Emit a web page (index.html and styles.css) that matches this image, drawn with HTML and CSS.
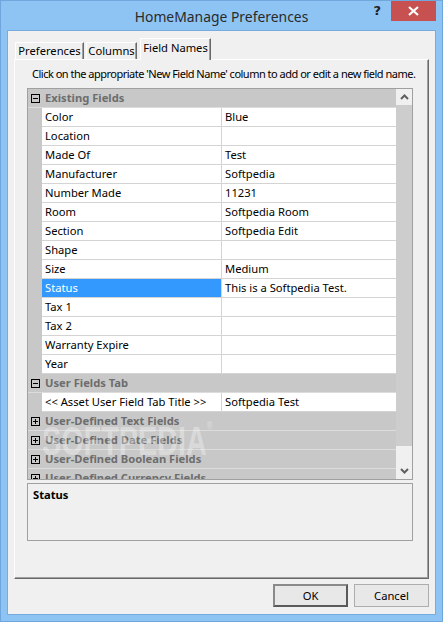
FILE: index.html
```html
<!DOCTYPE html>
<html>
<head>
<meta charset="utf-8">
<link rel="stylesheet" href="styles.css">
</head>
<body>
<div class="window">
  <div class="titlebar">
    <div></div>
    <div class="title">HomeManage Preferences</div>
    <div class="controls">
      <span class="help">?</span>
      <span class="close"><svg width="11" height="10" viewBox="0 0 11 10"><path d="M1 1 L10 9 M10 1 L1 9" stroke="#fff" stroke-width="2.2" fill="none"/></svg></span>
    </div>
  </div>
  <div class="client">
    <div class="tabs">
      <div class="tab t-pref">Preferences</div>
      <div class="tab t-col">Columns</div>
      <div class="tab active">Field Names</div>
    </div>
    <div class="panel">
      <p class="hint">Click on the appropriate 'New Field Name' column to add or edit a new field name.</p>
      <div class="grid">
        <div class="rows">
          <div class="cat"><span class="box minus"></span><span class="cat-label">Existing Fields</span></div>
          <div class="row"><span class="gut"></span><span class="name">Color</span><span class="val">Blue</span></div>
          <div class="row"><span class="gut"></span><span class="name">Location</span><span class="val"></span></div>
          <div class="row"><span class="gut"></span><span class="name">Made Of</span><span class="val">Test</span></div>
          <div class="row"><span class="gut"></span><span class="name">Manufacturer</span><span class="val">Softpedia</span></div>
          <div class="row"><span class="gut"></span><span class="name">Number Made</span><span class="val">11231</span></div>
          <div class="row"><span class="gut"></span><span class="name">Room</span><span class="val">Softpedia Room</span></div>
          <div class="row"><span class="gut"></span><span class="name">Section</span><span class="val">Softpedia Edit</span></div>
          <div class="row"><span class="gut"></span><span class="name">Shape</span><span class="val"></span></div>
          <div class="row"><span class="gut"></span><span class="name">Size</span><span class="val">Medium</span></div>
          <div class="row"><span class="gut"></span><span class="name selected">Status</span><span class="val">This is a Softpedia Test.</span></div>
          <div class="row"><span class="gut"></span><span class="name">Tax 1</span><span class="val"></span></div>
          <div class="row"><span class="gut"></span><span class="name">Tax 2</span><span class="val"></span></div>
          <div class="row"><span class="gut"></span><span class="name">Warranty Expire</span><span class="val"></span></div>
          <div class="row"><span class="gut"></span><span class="name">Year</span><span class="val"></span></div>
          <div class="cat"><span class="box minus"></span><span class="cat-label">User Fields Tab</span></div>
          <div class="row"><span class="gut"></span><span class="name">&lt;&lt; Asset User Field Tab Title &gt;&gt;</span><span class="val">Softpedia Test</span></div>
          <div class="cat"><span class="box plus"></span><span class="cat-label">User-Defined Text Fields</span></div>
          <div class="cat"><span class="box plus"></span><span class="cat-label">User-Defined Date Fields</span></div>
          <div class="cat"><span class="box plus"></span><span class="cat-label">User-Defined Boolean Fields</span></div>
          <div class="cat"><span class="box plus"></span><span class="cat-label">User-Defined Currency Fields</span></div>
          <div class="watermark">SOFTPEDIA<sup>®</sup></div>
        </div>
        <div class="scrollbar">
          <div class="sb-btn"><svg width="9" height="6" viewBox="0 0 9 6"><path d="M1 5 L4.5 1.5 L8 5" stroke="#606060" stroke-width="2" fill="none"/></svg></div>
          <div class="sb-thumb"></div>
          <div class="sb-track"></div>
          <div class="sb-btn"><svg width="9" height="6" viewBox="0 0 9 6"><path d="M1 1 L4.5 4.5 L8 1" stroke="#606060" stroke-width="2" fill="none"/></svg></div>
        </div>
      </div>
      <div class="desc"><b>Status</b></div>
    </div>
    <div class="buttons">
      <div class="btn default">OK</div>
      <div class="btn">Cancel</div>
    </div>
  </div>
</div>
</body>
</html>
```

FILE: styles.css
```css
* { box-sizing: border-box; }
body {
  margin: 0;
  width: 443px;
  height: 622px;
  overflow: hidden;
  font-family: "Noto Sans", "DejaVu Sans", sans-serif;
  font-size: 11.2px;
  color: #000;
}
.window {
  width: 443px;
  height: 622px;
  background: #8EC4F4;
  border: 1px solid #6FA6DB;
  padding: 0 6px 6px 6px;
  display: flex;
  flex-direction: column;
}
.titlebar {
  height: 29px;
  display: grid;
  grid-template-columns: 1fr auto 1fr;
}
.title {
  font-size: 13.9px;
  color: #2A2A2A;
  line-height: 29px;
  padding-top: 1px;
}
.controls {
  display: flex;
  justify-content: flex-end;
  align-items: flex-start;
}
.help {
  font-family: "DejaVu Sans", sans-serif;
  font-weight: bold;
  font-size: 13px;
  line-height: 20px;
  color: #222;
  margin-right: 10px;
}
.close {
  width: 45px;
  height: 20px;
  background: #C75050;
  display: flex;
  align-items: center;
  justify-content: center;
}
.client {
  flex: 1;
  background: #F0F0F0;
  border: 1px solid #76ACDF;
  display: flex;
  flex-direction: column;
}
.tabs {
  margin-top: 7px;
  height: 21px;
  padding-left: 7px;
  display: flex;
  align-items: flex-end;
}
.tab {
  height: 17px;
  border-top: 1px solid #fff;
  border-left: 1px solid #fff;
  border-right: 1px solid #696969;
  box-shadow: inset -1px 0 0 #A0A0A0;
  line-height: 15px;
  text-align: center;
  margin-right: 2px;
  background: #F0F0F0;
}
.t-pref { width: 69px; }
.t-col { width: 51px; }
.tab.active {
  width: 71px;
  height: 22px;
  margin-bottom: -1px;
  margin-left: 1px;
  position: relative;
  z-index: 2;
  line-height: 17px;
}
.panel {
  margin: 0 6px;
  height: 520px;
  border-top: 1px solid #fff;
  border-left: 1px solid #fff;
  border-right: 1px solid #696969;
  border-bottom: 1px solid #696969;
  box-shadow: inset -1px -1px 0 #A0A0A0;
  padding-left: 12px;
}
.hint {
  margin: 0 0 6px 0;
  padding: 6px 0 0 5px;
  line-height: 16px;
  font-size: 11px;
  letter-spacing: -0.5px;
  white-space: nowrap;
}
.grid {
  width: 386px;
  height: 392px;
  border: 1px solid #A0A0A0;
  display: flex;
  overflow: hidden;
}
.rows {
  width: 368px;
  position: relative;
  overflow: hidden;
}
.row {
  display: flex;
  height: 19px;
}
.gut {
  width: 14px;
  background: #C8C8C8;
}
.name {
  width: 180px;
  background: #fff;
  border-right: 1px solid #D4D4D4;
  border-bottom: 1px solid #D4D4D4;
  padding-left: 3px;
  line-height: 18px;
  white-space: nowrap;
}
.name.selected {
  background: #3399FF;
  color: #fff;
}
.val {
  flex: 1;
  background: #fff;
  border-bottom: 1px solid #D4D4D4;
  padding-left: 3px;
  line-height: 18px;
  white-space: nowrap;
}
.cat {
  height: 19px;
  background: #C8C8C8;
  border-bottom: 1px solid #DCDCDC;
  display: flex;
  align-items: center;
}
.cat-label {
  font-weight: bold;
  color: #6D6D6D;
  line-height: 18px;
  padding-left: 5px;
  white-space: nowrap;
}
.box {
  margin-left: 3px;
  width: 9px;
  height: 9px;
  border: 1px solid #000;
  position: relative;
  flex: none;
}
.box::before {
  content: "";
  position: absolute;
  left: 1px;
  top: 3px;
  width: 5px;
  height: 1px;
  background: #000;
}
.box.plus::after {
  content: "";
  position: absolute;
  left: 3px;
  top: 1px;
  width: 1px;
  height: 5px;
  background: #000;
}
.watermark {
  position: absolute;
  left: 14px;
  top: 330px;
  font-family: "Liberation Sans", sans-serif;
  font-weight: bold;
  font-size: 40px;
  transform: scaleX(0.72);
  transform-origin: left top;
  color: rgba(255, 255, 255, 0.32);
  pointer-events: none;
  white-space: nowrap;
}
.watermark sup {
  font-size: 11px;
  vertical-align: top;
}
.scrollbar {
  width: 16px;
  display: flex;
  flex-direction: column;
  background: #F0F0F0;
}
.sb-btn {
  height: 16px;
  display: flex;
  align-items: center;
  justify-content: center;
}
.sb-btn:last-child { height: 17px; }
.sb-thumb {
  height: 341px;
  background: #CDCDCD;
}
.sb-track { flex: 1; }
.desc {
  margin-top: 3px;
  width: 386px;
  height: 58px;
  border: 1px solid #A0A0A0;
  padding: 3px 5px;
  line-height: 16px;
}
.buttons {
  margin-top: 5px;
  margin-right: 6px;
  display: flex;
  justify-content: flex-end;
  gap: 6px;
}
.btn {
  width: 75px;
  height: 23px;
  border: 1px solid #ADADAD;
  background: #E8E8E8;
  text-align: center;
  line-height: 21px;
}
.btn.default {
  border: 2px solid #5A5A5A;
  border-top-color: #8A8A8A;
  border-left-color: #8A8A8A;
  line-height: 19px;
}
```
